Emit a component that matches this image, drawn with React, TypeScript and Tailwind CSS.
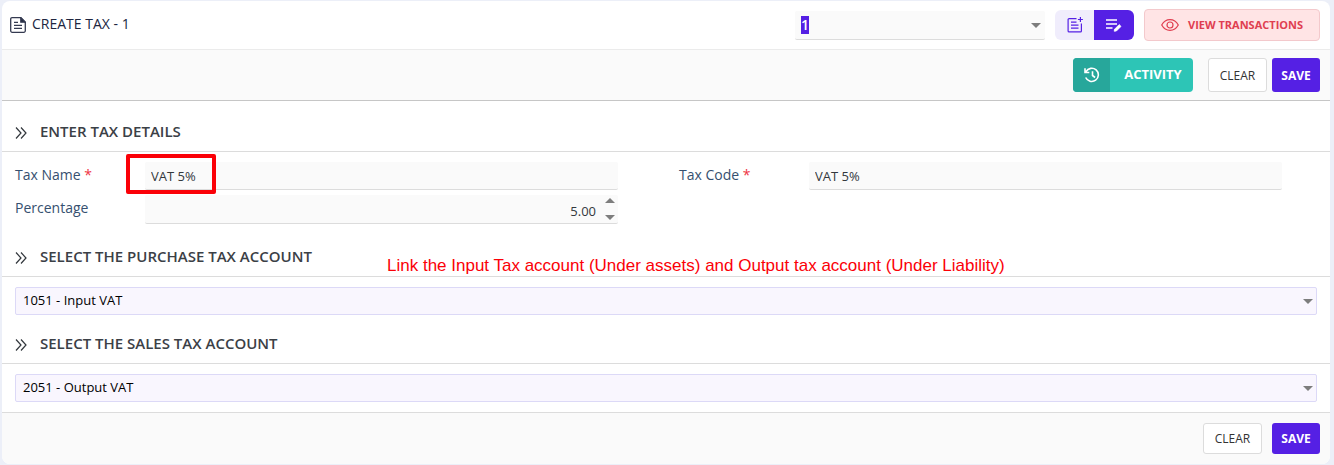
import React, { useState } from 'react';

const HeadingArrows = () => (
  <svg className="mt-1 h-3 w-3 shrink-0" viewBox="0 0 12 12" fill="none" stroke="#33383d" strokeWidth={1.2} aria-hidden="true">
    <path d="M1 0.5 6 6 1 11.5M6 0.5 11 6 6 11.5" />
  </svg>
);

const Caret = ({ up = false }: { up?: boolean }) => (
  <svg className="h-[5px] w-[10px]" viewBox="0 0 10 5" fill="#7d7d7d" aria-hidden="true">
    <path d={up ? 'M0 5 5 0 10 5z' : 'M0 0h10L5 5z'} />
  </svg>
);

const SectionHeading = ({ children }: { children: React.ReactNode }) => (
  <div className="flex items-center gap-[13px] border-b border-[#dcdcdc] px-[13px] pb-[10px]">
    <HeadingArrows />
    <h2 className="text-[15px] leading-5 font-semibold text-[#3b4046]">{children}</h2>
  </div>
);

interface AccountSelectProps {
  label: string;
  options: string[];
}

const AccountSelect = ({ label, options }: AccountSelectProps) => (
  <div className="relative mx-[13px] my-[10px]">
    <select
      aria-label={label}
      className="block h-7 w-full appearance-none rounded-xs border border-[#dcd9f7] bg-[#f9f6fe] px-[7px] text-[13px] font-medium text-black outline-none"
    >
      {options.map((option) => (
        <option key={option}>{option}</option>
      ))}
    </select>
    <span className="pointer-events-none absolute inset-y-0 right-1 flex items-center">
      <Caret />
    </span>
  </div>
);

const ClearButton = ({ onClick }: { onClick: () => void }) => (
  <button
    type="button"
    onClick={onClick}
    className="w-[59px] rounded-[3px] border border-[#dcdcdc] bg-white pt-px text-[12px] text-[#333]"
  >
    CLEAR
  </button>
);

const SaveButton = () => (
  <button type="submit" className="w-12 rounded-[3px] bg-[#5520e4] pt-px text-[12px] font-bold text-white">
    SAVE
  </button>
);

const fieldClass =
  'block h-7 w-full rounded-xs border-b border-[#dcdcdc] bg-[#fafafa] px-[6px] text-[13px] text-[#33383d] outline-none';
const labelClass = 'w-[130px] shrink-0 text-[14px] leading-[26px] font-medium text-[#36506f]';

const App: React.FC = () => {
  const [name, setName] = useState('VAT 5%');
  const [code, setCode] = useState('VAT 5%');
  const [percentage, setPercentage] = useState(5);

  const handleClear = () => {
    setName('');
    setCode('');
    setPercentage(0);
  };

  return (
    <div className="bg-[#eceff8] pt-px pr-1 pb-px pl-[2px] font-['Open_Sans','Noto_Sans',sans-serif]">
      <form className="rounded-lg bg-white" onSubmit={(e) => e.preventDefault()}>
        <header className="flex h-[49px] items-center justify-between border-b border-[#ebebeb] pr-[10px] pl-2">
          <h1 className="flex items-center gap-[6px] pb-[3px] text-[14px] text-[#20263f]">
            <svg className="mt-[2px] h-4 w-4" viewBox="0 0 16 16" fill="none" stroke="#343a50" strokeWidth={1.3} aria-hidden="true">
              <path d="M2 .7h8.800l4.500 4.500v8.600a1.500 1.500 0 0 1-1.500 1.500H2.200a1.500 1.500 0 0 1-1.500-1.500V2A1.300 1.300 0 0 1 2 .7z" />
              <path d="M10.8.7v4.5h4.5z" fill="#20263f" />
              <path d="M4 5.3h4M4 8.3h8M4 11.3h8" />
            </svg>
            CREATE TAX - 1
          </h1>

          <div className="flex items-center">
            <div className="relative mr-[10px] w-[250px]">
              <div className="flex h-[29px] items-center rounded-xs border-b border-[#dcdcdc] bg-[#fafafa] pl-[6px]">
                <button
                  type="button"
                  aria-label="Tax record"
                  className="w-2 bg-[#5520e4] text-left text-[14px] leading-[18px] font-semibold text-white"
                >
                  1
                </button>
              </div>
              <span className="pointer-events-none absolute inset-y-0 right-1 flex items-center">
                <Caret />
              </span>
            </div>

            <div className="mr-[10px] flex h-[30px] overflow-hidden rounded-md">
              <button type="button" aria-label="New tax" className="flex w-[39px] items-center justify-center bg-[#f0edfc]">
                <svg className="h-4 w-4" viewBox="0 0 16 16" fill="none" stroke="#5520e4" strokeWidth={1.2} aria-hidden="true">
                  <path d="M9.5 1.6H2.1a1 1 0 0 0-1 1v11.3a1 1 0 0 0 1 1h11.3a1 1 0 0 0 1-1V6.600" />
                  <path d="M4 5.2h5.5M4 8.2h7.5M4 11.2h7.5" />
                  <path d="M13.4 0v5M10.9 2.5h5" />
                </svg>
              </button>
              <button type="button" aria-label="Edit tax" className="flex w-10 items-center justify-center bg-[#5520e4]">
                <svg className="h-4 w-4" viewBox="0 0 16 16" fill="none" stroke="#fff" strokeWidth={1.7} aria-hidden="true">
                  <path d="M0 3h11M0 7h11M0 11h6.5" />
                  <path d="M8.2 14.2l.4-2 4.6-4.6 1.8 1.8-4.6 4.6z" fill="#fff" strokeWidth={0.8} />
                </svg>
              </button>
            </div>

            <button
              type="button"
              className="flex h-8 w-44 items-center rounded-[4px] border border-[#f3c9cc] bg-[#ffe4e5] pl-4 text-[11px] font-bold text-[#e03e50]"
            >
              <svg className="mr-[9px] h-3 w-[18px]" viewBox="0 0 18 12" fill="none" stroke="currentColor" strokeWidth={1.2} aria-hidden="true">
                <path d="M.7 6C2.6 2.6 5.6.7 9 .7S15.4 2.6 17.3 6C15.4 9.4 12.4 11.3 9 11.3S2.6 9.4.7 6z" />
                <circle cx="9" cy="6" r="3" />
              </svg>
              VIEW TRANSACTIONS
            </button>
          </div>
        </header>

        <div className="flex h-[51px] items-center justify-end border-b border-[#c6c6c6] bg-[#fafafa] pr-[10px]">
          <div className="flex h-[34px] items-stretch">
            <button
              type="button"
              className="mr-[15px] flex w-[120px] items-stretch overflow-hidden rounded-[4px] bg-[#2dc5b6] text-[13px] font-bold text-white"
            >
              <span className="flex w-[37px] items-center justify-center bg-[#27a79b]">
                <svg className="h-4 w-4" viewBox="0 0 16 16" fill="none" stroke="#fff" strokeWidth={1.6} aria-hidden="true">
                  <path d="M2 4.6A6.6 6.6 0 1 1 1.7 10.5M1 1.2v4.3h4.3M8.5 4.3v4.2l2.6 2" />
                </svg>
              </span>
              <span className="flex flex-1 items-center justify-center pl-[3px]">ACTIVITY</span>
            </button>
            <div className="flex gap-[5px]">
              <ClearButton onClick={handleClear} />
              <SaveButton />
            </div>
          </div>
        </div>

        <section className="pt-5">
          <SectionHeading>ENTER TAX DETAILS</SectionHeading>
          <div className="grid grid-cols-2 py-[10px]">
            <div className="flex flex-col gap-[5px] pr-12 pl-[13px]">
              <div className="flex">
                <label htmlFor="tax-name" className={labelClass}>
                  Tax Name <span className="text-[#ee3344]">*</span>
                </label>
                <div className="relative flex-1">
                  <input id="tax-name" className={fieldClass} value={name} onChange={(e) => setName(e.target.value)} />
                  <div className="pointer-events-none absolute -top-2 -left-[19px] h-10 w-[90px] rounded-xs border-4 border-[#fb0007]" />
                </div>
              </div>
              <div className="flex">
                <label htmlFor="percentage" className={labelClass}>
                  Percentage
                </label>
                <div className="flex h-[29px] flex-1 rounded-xs border-b border-[#dcdcdc] bg-[#fafafa] pr-[3px]">
                  <input
                    id="percentage"
                    className="min-w-0 flex-1 bg-transparent pt-[5px] pr-[9px] text-right text-[13px] text-[#33383d] outline-none"
                    value={percentage.toFixed(2)}
                    onChange={(e) => setPercentage(Number(e.target.value) || 0)}
                  />
                  <div className="flex flex-col justify-between py-[3px]">
                    <button type="button" aria-label="Increase" onClick={() => setPercentage(percentage + 1)}>
                      <Caret up />
                    </button>
                    <button type="button" aria-label="Decrease" onClick={() => setPercentage(percentage - 1)}>
                      <Caret />
                    </button>
                  </div>
                </div>
              </div>
            </div>
            <div className="flex items-start pr-12 pl-[13px]">
              <label htmlFor="tax-code" className={labelClass}>
                Tax Code <span className="text-[#ee3344]">*</span>
              </label>
              <input id="tax-code" className={fieldClass} value={code} onChange={(e) => setCode(e.target.value)} />
            </div>
          </div>
        </section>

        <section className="relative pt-3">
          <SectionHeading>SELECT THE PURCHASE TAX ACCOUNT</SectionHeading>
          <p className="absolute top-[22px] left-[385px] font-['Liberation_Sans',Arial,sans-serif] text-[17px] leading-5 whitespace-nowrap text-[#fb0007]">
            Link the Input Tax account (Under assets) and Output tax account (Under Liability)
          </p>
          <AccountSelect label="Purchase tax account" options={['1051 - Input VAT']} />
        </section>

        <section className="pt-[7px]">
          <div className="pt-px">
            <SectionHeading>SELECT THE SALES TAX ACCOUNT</SectionHeading>
          </div>
          <AccountSelect label="Sales tax account" options={['2051 - Output VAT']} />
        </section>

        <footer className="flex h-[52px] items-center justify-end rounded-b-lg border-t border-[#dcdcdc] bg-[#fafafa] pr-[10px]">
          <div className="flex h-[31px] items-stretch gap-[10px]">
            <ClearButton onClick={handleClear} />
            <SaveButton />
          </div>
        </footer>
      </form>
    </div>
  );
};

export default App;
